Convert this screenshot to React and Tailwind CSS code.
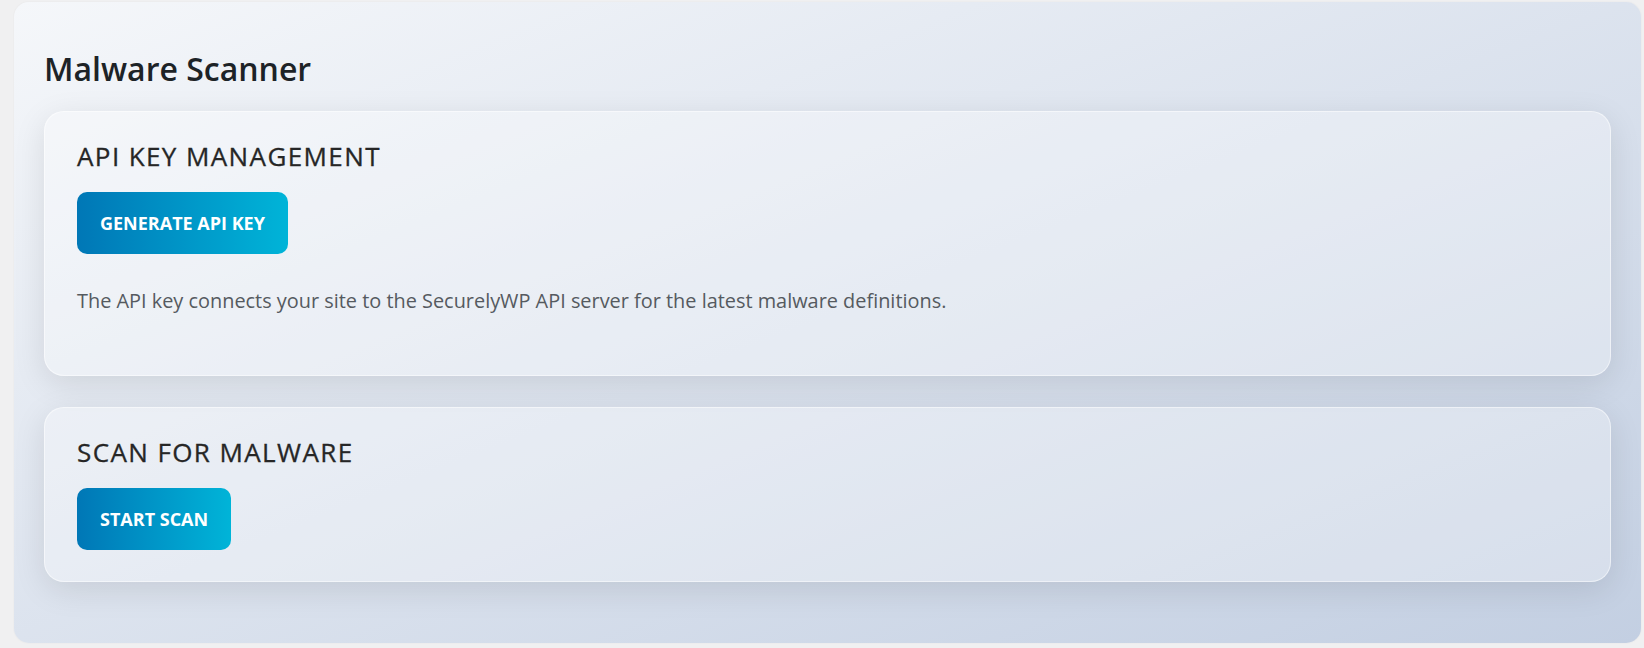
export default function App() {
  const font = { fontFamily: '"Open Sans", "Noto Sans", Arial, sans-serif' };
  return (
    <div className="min-h-[648px] w-full bg-[#f0f0f1] pt-[2px] pl-[14px]" style={font}>
      <div className="w-[1627px] rounded-[15px] bg-gradient-to-br from-[#f5f7fa] to-[#c3cfe2] px-[30px] pt-[47px] pb-[61px] shadow-[0_0_2px_rgba(0,0,0,0.06)]">
        <h1 className="m-0 text-[32px] leading-[40px] font-semibold text-[#1d2327]">Malware Scanner</h1>

        <div className="mt-[22px] rounded-[20px] border border-white/50 bg-white/30 px-8 pt-[28px] pb-[31px] shadow-[0_8px_32px_rgba(0,0,0,0.1)]">
          <h2 className="m-0 text-[26px] leading-[32px] font-medium tracking-[1.4px] text-[#262626] [-webkit-text-stroke:0.3px_#262626]">API KEY MANAGEMENT</h2>
          <button className="mt-[20px] flex h-[62px] items-center rounded-[10px] bg-gradient-to-r from-[#0077b6] to-[#00b4d8] px-[23px] text-[18px] font-bold text-white">
            GENERATE API KEY
          </button>
          <p className="mt-[32px] mb-[28px] text-[19.9px] leading-[30px] text-[#555a60]">
            The API key connects your site to the SecurelyWP API server for the latest malware definitions.
          </p>
        </div>

        <div className="mt-[31px] rounded-[20px] border border-white/50 bg-white/30 px-8 pt-[28px] pb-[31px] shadow-[0_8px_32px_rgba(0,0,0,0.1)]">
          <h2 className="m-0 text-[26px] leading-[32px] font-medium tracking-[1.4px] text-[#262626] [-webkit-text-stroke:0.3px_#262626]">SCAN FOR MALWARE</h2>
          <button className="mt-[20px] flex h-[62px] items-center rounded-[10px] bg-gradient-to-r from-[#0077b6] to-[#00b4d8] px-[23px] text-[18px] font-bold text-white">
            START SCAN
          </button>
        </div>
      </div>
    </div>
  );
}
